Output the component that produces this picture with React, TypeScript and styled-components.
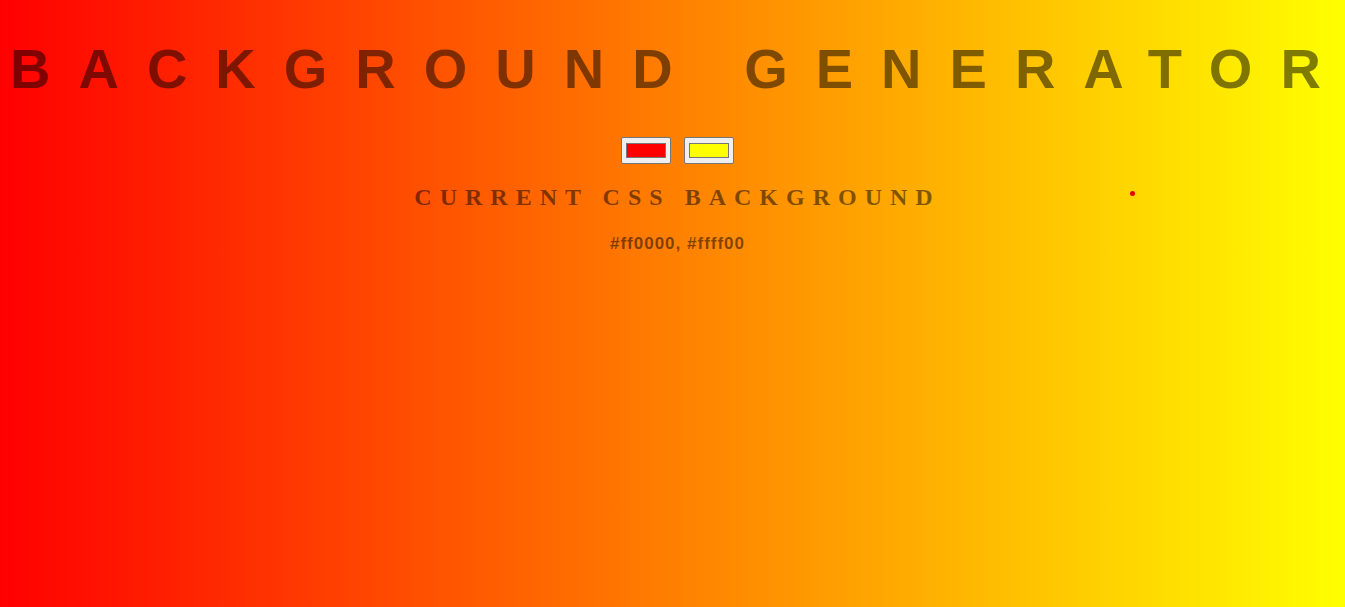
import React, { useState } from "react";
import styled, { createGlobalStyle } from "styled-components";

const GlobalStyle = createGlobalStyle`
  html, body {
    margin: 0;
    padding: 0;
    height: 100%;
  }
  body {
    font-family: "Liberation Serif", "Times New Roman", serif;
  }
`;

const Page = styled.div<{ $from: string; $to: string }>`
  position: relative;
  min-height: 100vh;
  box-sizing: border-box;
  padding: 37px 8px 0;
  overflow: hidden;
  background: linear-gradient(to right, ${(p) => p.$from}, ${(p) => p.$to});
  color: rgba(0, 0, 0, 0.5);
  text-align: center;
  text-transform: uppercase;
  letter-spacing: 8px;
`;

const Title = styled.h1`
  margin: 0;
  padding-left: 2px;
  font: bold 56px/64px "Liberation Sans", Arial, sans-serif;
  letter-spacing: 28px;
  white-space: nowrap;
  text-align: left;
`;

const Content = styled.section`
  padding-left: 10px;
`;

const Controls = styled.div`
  display: flex;
  justify-content: center;
  gap: 13px;
  margin-top: 36px;
`;

const ColorInput = styled.input`
  width: 50px;
  height: 27px;
  box-sizing: border-box;
  margin: 0;
  padding: 1px 2px;
  border: 1px solid #767676;
  border-radius: 2px;
  background: #efefef;
  cursor: pointer;

  &::-webkit-color-swatch-wrapper {
    padding: 4px 2px;
  }
  &::-webkit-color-swatch {
    border: 1px solid #777777;
    border-radius: 0;
  }
`;

const Subtitle = styled.h2`
  margin: 19px 0 0;
  font: bold 24px/28px "Liberation Serif", "Times New Roman", serif;
  letter-spacing: 8px;
`;

const CssValue = styled.h3`
  margin: 23px 0 0;
  font: bold 17px/20px "Liberation Sans", Arial, sans-serif;
  letter-spacing: 1px;
  text-transform: none;
`;

const Dot = styled.span`
  position: absolute;
  left: 1130px;
  top: 191px;
  width: 5px;
  height: 5px;
  border-radius: 50%;
  background: #e60000;
`;

export default function App() {
  const [c1, setC1] = useState("#ff0000");
  const [c2, setC2] = useState("#ffff00");
  return (
    <>
      <GlobalStyle />
      <Page $from={c1} $to={c2}>
        <Title>Background Generator</Title>
        <Content>
          <Controls>
            <ColorInput type="color" value={c1} onChange={(e) => setC1(e.target.value)} />
            <ColorInput type="color" value={c2} onChange={(e) => setC2(e.target.value)} />
          </Controls>
          <Subtitle>Current CSS Background</Subtitle>
          <CssValue>
            {c1}, {c2}
          </CssValue>
        </Content>
        <Dot />
      </Page>
    </>
  );
}
